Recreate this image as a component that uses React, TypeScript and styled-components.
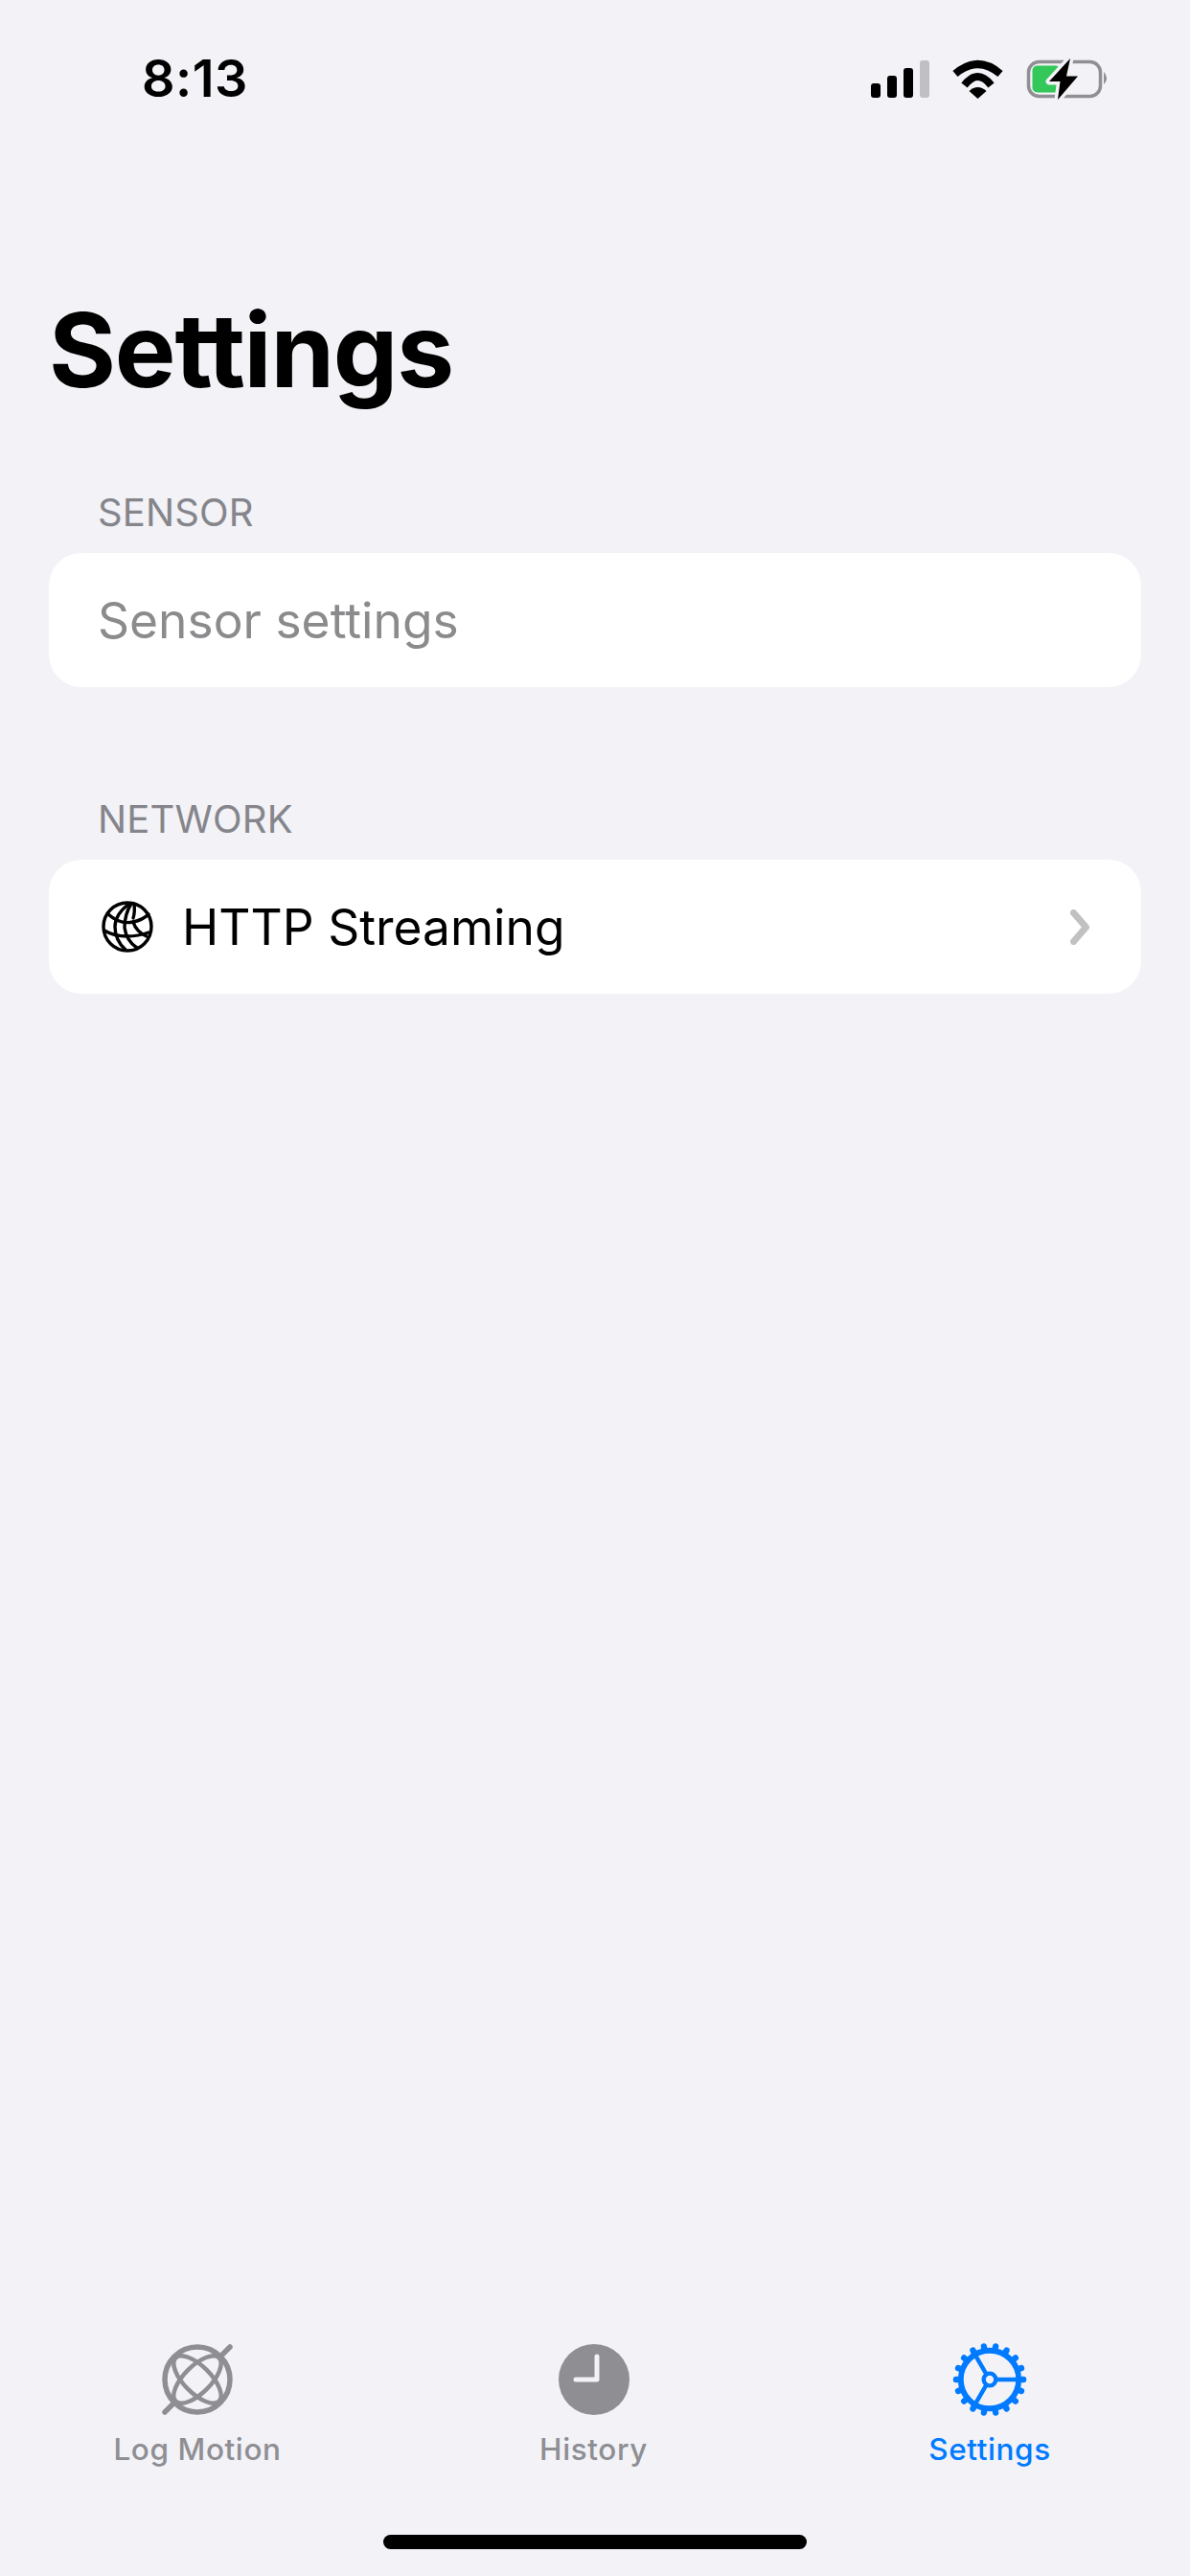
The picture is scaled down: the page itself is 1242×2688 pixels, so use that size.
import React from 'react';
import styled, { createGlobalStyle } from 'styled-components';

const Global = createGlobalStyle`
  html, body { margin: 0; padding: 0; background: #f2f2f7; }
  * { box-sizing: border-box; }
`;

const Page = styled.div`
  width: 1242px;
  height: 2688px;
  display: flex;
  flex-direction: column;
  background: #f2f2f7;
  font-family: Inter, "Liberation Sans", sans-serif;
  color: #000;
  overflow: hidden;
`;

const StatusBar = styled.div`
  height: 132px;
  padding: 50px 84px 0 148px;
  display: flex;
  justify-content: space-between;
  align-items: flex-start;
`;

const Clock = styled.div`
  font-size: 54px;
  line-height: 64px;
  font-weight: 600;
  letter-spacing: 0.5px;
`;

const StatusIcons = styled.svg`
  display: block;
  margin-top: 10px;
`;

const Title = styled.h1`
  margin: 171px 0 0 51px;
  font-size: 107px;
  line-height: 124px;
  font-weight: 700;
  letter-spacing: -1.2px;
`;

const Content = styled.div`
  flex: 1;
  padding: 85px 51px 0;
  display: flex;
  flex-direction: column;
`;

const SectionLabel = styled.div`
  height: 46px;
  margin-left: 51px;
  font-size: 40px;
  line-height: 46px;
  color: #85858b;
  letter-spacing: 0.15px;
`;

const Card = styled.div`
  height: 140px;
  margin-top: 19px;
  margin-bottom: 115px;
  padding: 0 54px 0 51px;
  display: flex;
  align-items: center;
  background: #fff;
  border-radius: 34px;
`;

const RowText = styled.div<{ $muted?: boolean }>`
  flex: 1;
  font-size: 51.5px;
  line-height: 62px;
  color: ${(p) => (p.$muted ? '#8b8b8e' : '#000')};
`;

const RowIcon = styled.svg`
  display: block;
  margin: 0 30px 0 4px;
`;

const TabBar = styled.div`
  height: 201px;
  padding: 0 109px 0 106px;
  display: flex;
  justify-content: space-between;
`;

const Tab = styled.div<{ $active?: boolean }>`
  width: 200px;
  display: flex;
  flex-direction: column;
  align-items: center;
  color: ${(p) => (p.$active ? '#007aff' : '#8e8e93')};
`;

const TabIcon = styled.svg`
  display: block;
`;

const TabLabel = styled.div`
  margin-top: 14px;
  font-size: 31.5px;
  line-height: 40px;
  font-weight: 500;
  letter-spacing: 0.6px;
  white-space: nowrap;
`;

const HomeArea = styled.div`
  height: 43px;
  display: flex;
  justify-content: center;
`;

const HomeBar = styled.div`
  width: 442px;
  height: 15px;
  border-radius: 8px;
  background: #000;
`;

function StatusGlyphs() {
  return (
    <StatusIcons width="250" height="50" viewBox="0 0 250 50">
      <rect x="1" y="27" width="10" height="15" rx="3" fill="#000" />
      <rect x="18" y="19" width="10" height="23" rx="3" fill="#000" />
      <rect x="35" y="11" width="10" height="31" rx="3" fill="#000" />
      <rect x="52" y="3" width="10" height="39" rx="3" fill="#bfbfc4" />
      <g fill="none" stroke="#000" strokeWidth="8">
        <path d="M89 17 Q112.5 -3 136 17" />
        <path d="M98.5 29 Q112.5 11 126.5 29" />
      </g>
      <path d="M103.5 35 Q112.5 27 121.5 35 L112.5 43 Z" fill="#000" />
      <rect x="165.5" y="4.5" width="75" height="36" rx="11" fill="none" stroke="#8f8f94" strokeWidth="3.5" />
      <rect x="169.5" y="8.5" width="29" height="28" rx="5" fill="#34c759" />
      <path d="M244 15 Q250 21.5 244 28 Z" fill="#8f8f94" />
      <path
        d="M209 1 L187 25 L198.5 25 L196 44 L217 19.5 L205 19.5 Z"
        fill="#000"
        stroke="#f2f2f7"
        strokeWidth="7"
        strokeLinejoin="round"
        paintOrder="stroke"
      />
    </StatusIcons>
  );
}

function Globe() {
  return (
    <RowIcon width="54" height="54" viewBox="0 0 54 54" fill="none" stroke="#000" strokeWidth="3.4" strokeLinecap="round">
      <circle cx="27" cy="27" r="25" />
      <path d="M29 3 Q14 14 14 27 Q14 41 25 51" />
      <path d="M31 3 Q24 14 24 28 Q26 42 37 49" />
      <path d="M34 3 Q35 12 33 18" />
      <path d="M7 14 Q19 25 33 22 Q43 20 49 14" />
      <path d="M3 31 Q13 37 27 37 Q38 37 49 33" />
      <path d="M33 22 Q36 32 47 37" />
    </RowIcon>
  );
}

function MotionIcon() {
  return (
    <TabIcon width="76" height="78" viewBox="0 0 76 78" fill="none" stroke="currentColor" strokeLinecap="round">
      <circle cx="38" cy="39" r="34" strokeWidth="5.5" />
      <ellipse cx="38" cy="39" rx="32" ry="14" strokeWidth="4.5" transform="rotate(45 38 39)" />
      <ellipse cx="38" cy="39" rx="32" ry="14" strokeWidth="4.5" transform="rotate(-45 38 39)" />
      <path d="M4 73 L13 64 M62 15 L72 5" strokeWidth="5.5" />
    </TabIcon>
  );
}

function ClockIcon() {
  return (
    <TabIcon width="76" height="78" viewBox="0 0 76 78">
      <circle cx="38" cy="39" r="37" fill="currentColor" />
      <path d="M41 15 V39 H19" fill="none" stroke="#f2f2f7" strokeWidth="5" strokeLinecap="round" strokeLinejoin="round" />
    </TabIcon>
  );
}

function GearIcon() {
  const teeth = Array.from({ length: 18 }, (_, i) => i * 20 + 10);
  return (
    <TabIcon width="80" height="78" viewBox="0 -1 80 80" fill="none" stroke="currentColor">
      <circle cx="40" cy="39" r="31" strokeWidth="6" />
      {teeth.map((a) => (
        <line key={a} x1="40" y1="5" x2="40" y2="3" strokeWidth="6.5" strokeLinecap="round" transform={`rotate(${a} 40 39)`} />
      ))}
      <circle cx="40" cy="39" r="6.5" strokeWidth="4.5" />
      <path d="M46.5 39 H70 M36.5 33.5 L24 12 M36.5 44.5 L24 66" strokeWidth="4.5" />
    </TabIcon>
  );
}

function Chevron() {
  return (
    <svg width="20" height="37" viewBox="0 0 20 37" style={{ display: 'block' }}>
      <path d="M3.5 3.5 L16.5 18.5 L3.5 33.5" fill="none" stroke="#c1c1c3" strokeWidth="7" strokeLinecap="round" strokeLinejoin="round" />
    </svg>
  );
}

export default function App() {
  return (
    <Page>
      <Global />
      <StatusBar>
        <Clock>8:13</Clock>
        <StatusGlyphs />
      </StatusBar>
      <Title>Settings</Title>
      <Content>
        <SectionLabel>SENSOR</SectionLabel>
        <Card>
          <RowText $muted>Sensor settings</RowText>
        </Card>
        <SectionLabel>NETWORK</SectionLabel>
        <Card>
          <Globe />
          <RowText>HTTP Streaming</RowText>
          <Chevron />
        </Card>
      </Content>
      <TabBar>
        <Tab>
          <MotionIcon />
          <TabLabel>Log Motion</TabLabel>
        </Tab>
        <Tab>
          <ClockIcon />
          <TabLabel>History</TabLabel>
        </Tab>
        <Tab $active>
          <GearIcon />
          <TabLabel>Settings</TabLabel>
        </Tab>
      </TabBar>
      <HomeArea>
        <HomeBar />
      </HomeArea>
    </Page>
  );
}
